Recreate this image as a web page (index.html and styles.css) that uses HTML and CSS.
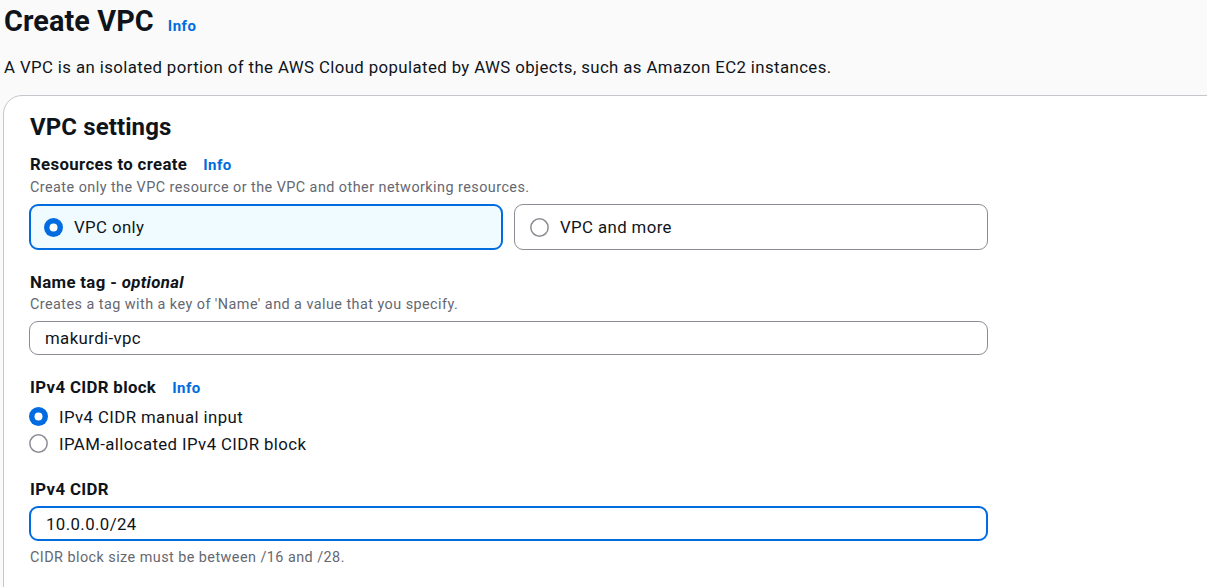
FILE: index.html
```html
<!DOCTYPE html>
<html lang="en">
<head>
<meta charset="utf-8">
<title>Create VPC</title>
<link rel="stylesheet" href="styles.css">
</head>
<body>
<div class="page">
  <header class="page-header">
    <h1 class="title">Create VPC<a class="info info-title" href="#">Info</a></h1>
    <p class="lead">A VPC is an isolated portion of the AWS Cloud populated by AWS objects, such as Amazon EC2 instances.</p>
  </header>

  <section class="container">
    <h2 class="container-title">VPC settings</h2>

    <div class="form">
      <div class="field field-first">
        <div class="label">Resources to create<a class="info" href="#">Info</a></div>
        <div class="desc">Create only the VPC resource or the VPC and other networking resources.</div>
        <div class="tiles">
          <div class="tile tile-selected">
            <svg class="radio" viewBox="0 0 20 20" width="19" height="19"><circle cx="10" cy="10" r="10" fill="#006ce0"/><circle cx="10" cy="10" r="4.2" fill="#fff"/></svg>
            <span class="tile-text">VPC only</span>
          </div>
          <div class="tile">
            <svg class="radio" viewBox="0 0 20 20" width="19" height="19"><circle cx="10" cy="10" r="9.1" fill="#fff" stroke="#8c8c94" stroke-width="1.6"/></svg>
            <span class="tile-text">VPC and more</span>
          </div>
        </div>
      </div>

      <div class="field">
        <div class="label">Name tag - <em class="opt">optional</em></div>
        <div class="desc">Creates a tag with a key of 'Name' and a value that you specify.</div>
        <div class="input">makurdi-vpc</div>
      </div>

      <div class="field">
        <div class="label">IPv4 CIDR block<a class="info" href="#">Info</a></div>
        <div class="radio-group">
          <div class="radio-row">
            <svg class="radio" viewBox="0 0 20 20" width="19" height="19"><circle cx="10" cy="10" r="10" fill="#006ce0"/><circle cx="10" cy="10" r="4.2" fill="#fff"/></svg>
            <span>IPv4 CIDR manual input</span>
          </div>
          <div class="radio-row">
            <svg class="radio" viewBox="0 0 20 20" width="19" height="19"><circle cx="10" cy="10" r="9.1" fill="#fff" stroke="#8c8c94" stroke-width="1.6"/></svg>
            <span>IPAM-allocated IPv4 CIDR block</span>
          </div>
        </div>
      </div>

      <div class="field">
        <div class="label">IPv4 CIDR</div>
        <div class="input input-focused">10.0.0.0/24</div>
        <div class="constraint">CIDR block size must be between /16 and /28.</div>
      </div>
    </div>
  </section>
</div>
</body>
</html>
```

FILE: styles.css
```css
html, body {
  margin: 0;
  padding: 0;
  background: #fafafa;
  overflow: hidden;
}

body {
  font-family: Roboto, "Liberation Sans", Arial, sans-serif;
  color: #0f141a;
  width: 1207px;
  height: 587px;
}

.page {
  padding-left: 4px;
}

.title {
  margin: 0;
  font-size: 28.8px;
  line-height: 42px;
  font-weight: 700;
  letter-spacing: 0.1px;
}

.info {
  color: #006ce0;
  font-weight: 700;
  font-size: 15px;
  letter-spacing: 0.5px;
  text-decoration: none;
  margin-left: 16px;
}

.info-title {
  margin-left: 14px;
}

.lead {
  margin: 8px 0 0;
  font-size: 16.8px;
  line-height: 24px;
  letter-spacing: 0.4px;
}

.container {
  margin-top: 16px;
  margin-left: -1px;
  width: 1260px;
  height: 520px;
  background: #fff;
  border: 1px solid #c6c6cd;
  border-radius: 19px;
  padding: 16px 0 0 25px;
  box-sizing: border-box;
}

.container-title {
  margin: 0 0 0 1px;
  font-size: 24px;
  line-height: 30px;
  font-weight: 700;
  letter-spacing: 0.1px;
}

.form {
  width: 959px;
  display: flex;
  flex-direction: column;
}

.field {
  display: flex;
  flex-direction: column;
  margin-top: 20px;
}

.field-first {
  margin-top: 10px;
}

.label {
  padding-left: 1px;
  font-size: 16.8px;
  line-height: 24px;
  font-weight: 700;
  letter-spacing: 0.35px;
}

.opt {
  font-style: italic;
}

.desc, .constraint {
  padding-left: 1px;
  font-size: 14.4px;
  line-height: 22px;
  color: #656871;
  letter-spacing: 0.45px;
}

.tiles {
  margin-top: 5px;
  display: grid;
  grid-template-columns: 1fr 1fr;
  gap: 11px;
}

.tile {
  height: 46px;
  box-sizing: border-box;
  border: 1px solid #8c8c94;
  border-radius: 9px;
  background: #fff;
  display: flex;
  align-items: center;
  padding-left: 15px;
  gap: 11px;
  font-size: 16.8px;
  letter-spacing: 0.4px;
}

.tile-selected {
  border: 2px solid #006ce0;
  background: #f0fbff;
  padding-left: 13px;
}

.radio {
  flex: none;
  display: block;
}

.input {
  margin-top: 5px;
  height: 34px;
  box-sizing: border-box;
  border: 1px solid #8c8c94;
  border-radius: 9px;
  padding-left: 15px;
  display: flex;
  align-items: center;
  font-size: 16.8px;
  letter-spacing: 0.4px;
  background: #fff;
}

.input-focused {
  margin-top: 5px;
  height: 35px;
  border: 2px solid #006ce0;
  padding-left: 15px;
}

.constraint {
  margin-top: 6px;
}

.radio-group {
  margin-top: 3px;
  display: flex;
  flex-direction: column;
}

.radio-row {
  height: 27px;
  display: flex;
  align-items: center;
  gap: 11px;
  font-size: 16.8px;
  letter-spacing: 0.4px;
}
```
